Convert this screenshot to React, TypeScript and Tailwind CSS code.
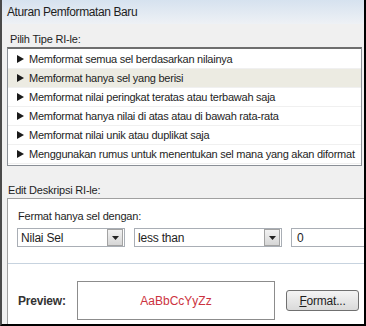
import React from "react";

const rules = [
  "Memformat semua sel berdasarkan nilainya",
  "Memformat hanya sel yang berisi",
  "Memformat nilai peringkat teratas atau terbawah saja",
  "Memformat hanya nilai di atas atau di bawah rata-rata",
  "Memformat nilai unik atau duplikat saja",
  "Menggunakan rumus untuk menentukan sel mana yang akan diformat",
];

function RowArrow() {
  return (
    <svg width="7" height="8" viewBox="0 0 7 8" className="shrink-0">
      <path d="M0 0 L7 4 L0 8 Z" fill="#1a1a1a" />
    </svg>
  );
}

function DropButton() {
  return (
    <div className="flex h-[17px] w-[16px] items-center justify-center border border-[#a3a3a3] bg-gradient-to-b from-[#f2f2f2] to-[#d6d6d6]">
      <svg width="7" height="4" viewBox="0 0 7 4">
        <path d="M0 0 L7 0 L3.5 4 Z" fill="#222" />
      </svg>
    </div>
  );
}

function Select({ value, width }: { value: string; width: string }) {
  return (
    <div
      className={`flex h-[19px] shrink-0 items-center justify-between border border-[#a9aeb5] bg-white pl-[3px] pr-[1px] text-[12px] ${width}`}
    >
      <span>{value}</span>
      <DropButton />
    </div>
  );
}

export default function App() {
  return (
    <div className="flex h-[326px] w-[366px] flex-col overflow-hidden border-b-2 border-l-2 border-r-2 border-b-black border-l-[#4a4a4a] border-r-black bg-[#f0f0f0] font-['Liberation_Sans',Arial,sans-serif] text-[11px] tracking-[-0.2px] text-[#1e1e1e]">
      <div className="flex h-[24px] shrink-0 items-center bg-gradient-to-b from-[#d6e2ef] to-[#eef1f5] pl-[5px] text-[12px] tracking-[-0.4px]">
        Aturan Pemformatan Baru
      </div>

      <div className="h-[23px] shrink-0 pl-[8px] pt-[9px] leading-[12px]">Pilih Tipe RI-le:</div>

      <div className="ml-[5px] mr-[2px] h-[119px] shrink-0 border border-t-2 border-[#8a8f96] border-t-[#6e6e6e] bg-white pt-[1px] tracking-[-0.25px]">
        {rules.map((r, i) => (
          <div
            key={r}
            className={`flex h-[19px] items-center gap-[5px] border-b border-[#f0f0f0] pl-[9px] ${
              i === 1 ? "bg-[#ecebe2]" : ""
            }`}
          >
            <RowArrow />
            <span className="whitespace-nowrap">{r}</span>
          </div>
        ))}
      </div>

      <div className="h-[32px] shrink-0 pl-[6px] pt-[18px] leading-[12px]">Edit Deskripsi RI-le:</div>

      <div className="ml-[5px] flex flex-1 flex-col border-l border-t border-[#a0a0a0] bg-white">
        <div className="mt-[11px] pl-[10px] leading-[12px]">Fermat hanya sel dengan:</div>

        <div className="mt-[6px] flex items-center pl-[9px]">
          <Select value="Nilai Sel" width="w-[108px]" />
          <div className="w-[9px] shrink-0" />
          <Select value="less than" width="w-[148px]" />
          <div className="w-[9px] shrink-0" />
          <div className="flex h-[19px] w-[120px] shrink-0 items-center border border-[#a9aeb5] pl-[5px] text-[12px]">0</div>
        </div>

        <div className="mt-[16px] h-px bg-[#c7d3df]" />

        <div className="mt-[17px] flex items-center pl-[10px]">
          <div className="w-[59px] text-[12px] font-bold text-[#333]">Preview:</div>
          <div className="flex h-[39px] w-[198px] items-center justify-center border border-[#8c8c8c] text-[12px] tracking-normal text-[#cc3340]">
            AaBbCcYyZz
          </div>
          <button className="ml-[11px] flex h-[21px] w-[73px] items-center justify-center rounded-[3px] border border-[#707070] bg-gradient-to-b from-[#f4f4f4] to-[#dadada] text-[12px]">
            <span className="underline">F</span>ormat...
          </button>
        </div>
      </div>
    </div>
  );
}
